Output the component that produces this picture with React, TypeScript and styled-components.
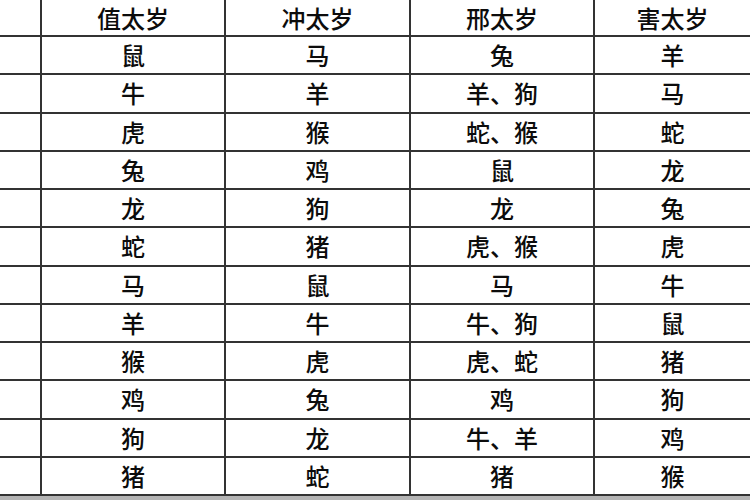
import styled, { createGlobalStyle } from "styled-components";
import { Fragment } from "react";

const rows = [
  ["鼠", "马", "兔", "羊"],
  ["牛", "羊", "羊、狗", "马"],
  ["虎", "猴", "蛇、猴", "蛇"],
  ["兔", "鸡", "鼠", "龙"],
  ["龙", "狗", "龙", "兔"],
  ["蛇", "猪", "虎、猴", "虎"],
  ["马", "鼠", "马", "牛"],
  ["羊", "牛", "牛、狗", "鼠"],
  ["猴", "虎", "虎、蛇", "猪"],
  ["鸡", "兔", "鸡", "狗"],
  ["狗", "龙", "牛、羊", "鸡"],
  ["猪", "蛇", "猪", "猴"],
];

const headers = ["值太岁", "冲太岁", "邢太岁", "害太岁"];

const GlobalStyle = createGlobalStyle`
  html, body {
    margin: 0;
    padding: 0;
    background: #fff;
    overflow: hidden;
  }
`;

const Page = styled.div`
  width: 750px;
  height: 500px;
  background: #b4b4b4;
  overflow: hidden;
`;

const Table = styled.div`
  display: grid;
  grid-template-columns: 40px 182px 183px 182px 155px;
  grid-template-rows: 35px repeat(12, 36.25px);
  gap: 2px;
  background: #333;
  padding-bottom: 2px;
  width: 750px;
`;

const Cell = styled.div`
  background: #fff;
  display: flex;
  align-items: center;
  justify-content: center;
  font-family: "Noto Sans CJK SC", "Noto Sans", sans-serif;
  font-size: 24px;
  font-weight: 500;
  color: #0c0c0c;
  line-height: 1;
`;

function App() {
  return (
    <Page>
      <GlobalStyle />
      <Table>
        <Cell />
        {headers.map((h) => (
          <Cell key={h}>{h}</Cell>
        ))}
        {rows.map((row, i) => (
          <Fragment key={i}>
            <Cell />
            {row.map((v, j) => (
              <Cell key={j}>{v}</Cell>
            ))}
          </Fragment>
        ))}
      </Table>
    </Page>
  );
}

export default App;
